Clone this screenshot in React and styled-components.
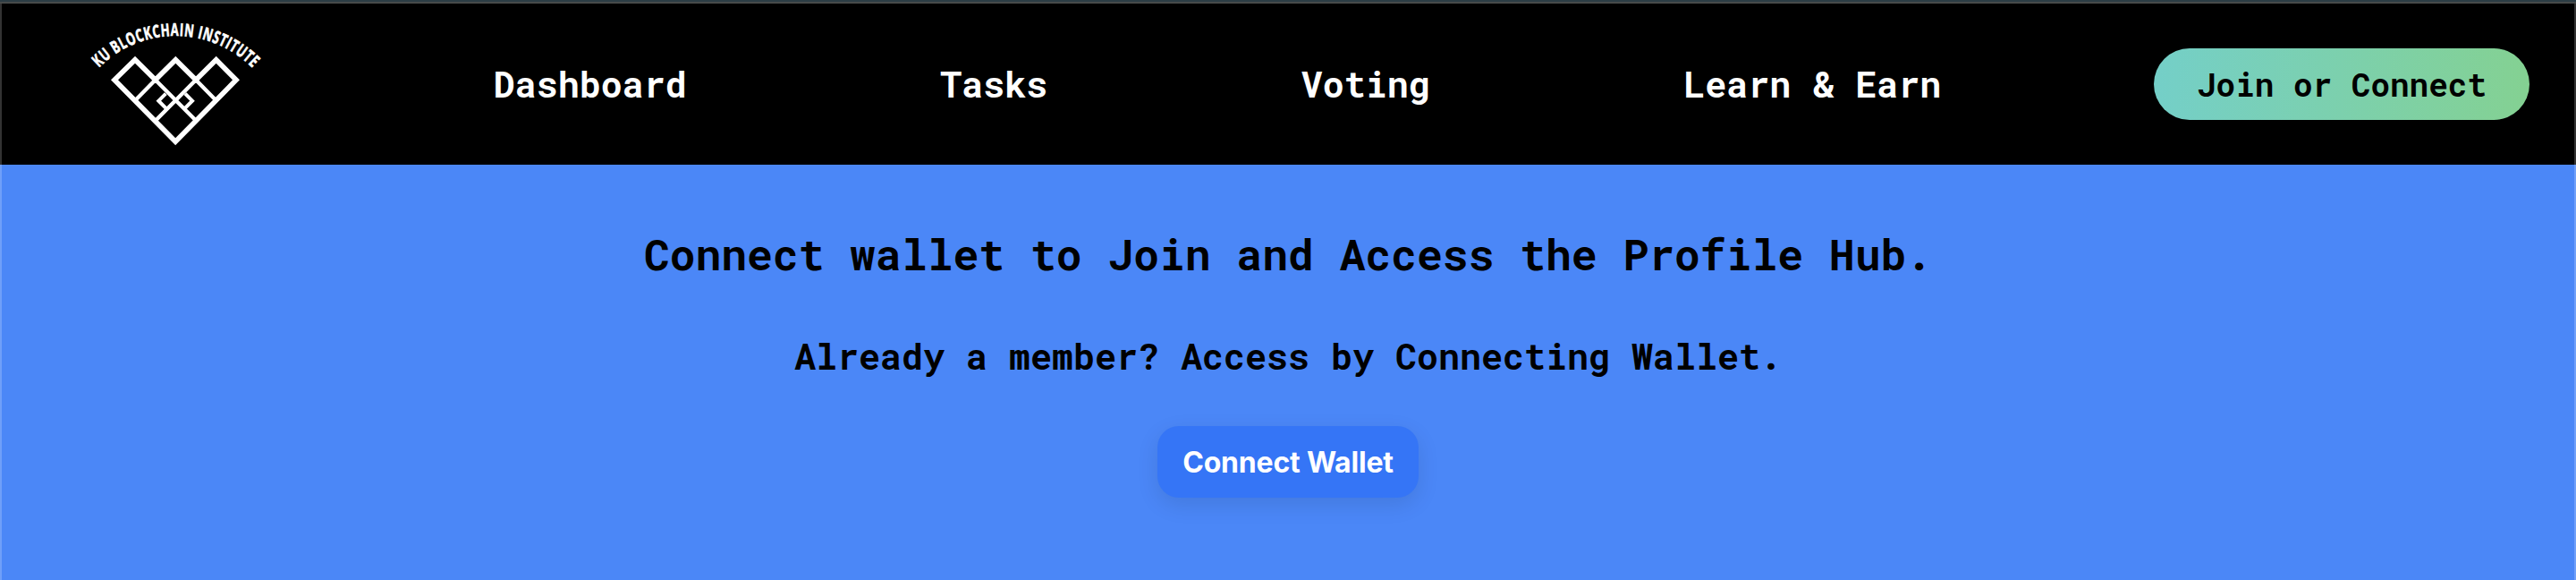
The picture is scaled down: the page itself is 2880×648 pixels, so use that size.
import React from "react";
import styled, { createGlobalStyle } from "styled-components";

const GlobalStyle = createGlobalStyle`
  *, *::before, *::after { box-sizing: border-box; }
  body { margin: 0; background: #4b87f7; }
`;

const mono = `"Roboto Mono", "DejaVu Sans Mono", "Liberation Mono", monospace`;

const Page = styled.div`
  height: 648px;
  overflow: hidden;
  background: #4b87f7;
`;

const TopEdge = styled.div`
  height: 4px;
  background: #2c3d45;
  border-bottom: 2px solid #474a4a;
`;

const Header = styled.header`
  display: flex;
  align-items: center;
  height: 180px;
  padding-right: 50px;
  border: solid #333;
  border-width: 0 2px;
  background: #000;
`;

const LogoLink = styled.a`
  display: block;
  width: 240px;
  height: 180px;
  margin-left: 78px;
`;

const Nav = styled.nav`
  display: flex;
  flex: 1;
  justify-content: space-around;
  padding: 0 96px 2px 90px;
`;

const NavLink = styled.a`
  font: 700 40px/53px ${mono};
  color: #fff;
`;

const JoinButton = styled.button`
  width: 420px;
  height: 80px;
  padding: 0;
  border: 0;
  border-radius: 40px;
  background: linear-gradient(to right, #74cfc8, #84d192);
  font: 700 36px/48px ${mono};
  color: #000;
`;

const Main = styled.main`
  display: flex;
  flex-direction: column;
  align-items: center;
  height: 464px;
  border: solid #6f9ff9;
  border-width: 0 2px;
`;

const Title = styled.h1`
  margin: 68px 0 0;
  font: 700 48px/64px ${mono};
  color: #000;
`;

const Subtitle = styled.h2`
  margin: 55px 0 0;
  font: 700 40px/54px ${mono};
  color: #000;
`;

const WalletButton = styled.button`
  width: 292px;
  height: 80px;
  margin-top: 51px;
  padding: 2px 0 0;
  border: 0;
  border-radius: 24px;
  background: #3575f6;
  box-shadow: 0 8px 24px rgba(0, 0, 0, 0.1);
  font: 650 32px/36px Inter, sans-serif;
  letter-spacing: -0.2px;
  color: #fff;
`;

const Logo = () => (
  <svg width="240" height="180" viewBox="0 12 720 540" fill="none" stroke="#fff">
    <path id="arc" d="M92 227 A362 362 0 0 1 608 229" stroke="none" />
    <text
      fill="#fff"
      stroke="#fff"
      strokeWidth="2"
      fontFamily="'Open Sans', sans-serif"
      fontWeight="700"
      fontSize="58"
      letterSpacing="3"
    >
      <textPath href="#arc" textLength="574" lengthAdjust="spacingAndGlyphs">
        KU BLOCKCHAIN INSTITUTE
      </textPath>
    </text>
    <path
      strokeWidth="17"
      d="M281 268 L213 200 L144 268 L348.5 475 L552 268 L485 200 L417 268 L349 200 Z"
    />
    <path
      strokeWidth="13"
      d="M281 268 L418 405 M417 268 L281 405 M281 268 L214 336 M417 268 L484 336"
    />
    <path
      strokeWidth="12"
      d="M316 314 L292 338 L318 364 M381 314 L405 338 L379 364"
    />
  </svg>
);

export default function App() {
  return (
    <Page>
      <GlobalStyle />
      <TopEdge />
      <Header>
        <LogoLink>
          <Logo />
        </LogoLink>
        <Nav>
          <NavLink>Dashboard</NavLink>
          <NavLink>Tasks</NavLink>
          <NavLink>Voting</NavLink>
          <NavLink>Learn &amp; Earn</NavLink>
        </Nav>
        <JoinButton>Join or Connect</JoinButton>
      </Header>
      <Main>
        <Title>Connect wallet to Join and Access the Profile Hub.</Title>
        <Subtitle>Already a member? Access by Connecting Wallet.</Subtitle>
        <WalletButton>Connect Wallet</WalletButton>
      </Main>
    </Page>
  );
}
